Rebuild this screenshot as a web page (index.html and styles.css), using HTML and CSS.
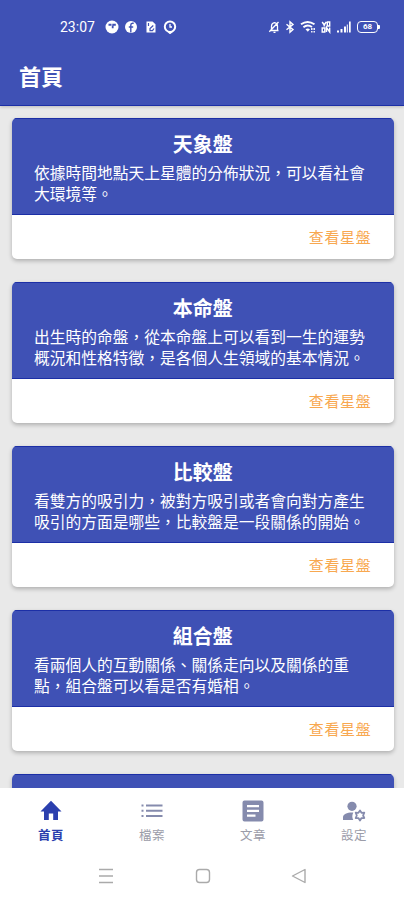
FILE: index.html
```html
<!DOCTYPE html>
<html lang="zh-TW">
<head>
    <meta charset="UTF-8">
    <meta name="viewport" content="width=device-width, initial-scale=1.0">
    <title>首頁</title>
    <link rel="stylesheet" href="styles.css">
</head>
<body>
    <div class="app">
        <header class="header">
            <div class="status-bar">
                <div class="status-left">
                    <span class="clock">23:07</span>
                    <svg width="14" height="14" viewBox="0 0 14 14"><circle cx="7" cy="7" r="6.5" fill="#fff"/><path d="M3.500 3.800h3v2h-3zM7.300 3.800h3.500v2H8.600v2.400H6.800V5.800h.5z" fill="#3f51b5"/></svg>
                    <svg width="14" height="14" viewBox="0 0 14 14"><circle cx="7" cy="7" r="6" fill="#fff"/><path d="M9.7 3.2H8.5Q6.8 3.2 6.8 5v1.2M4.8 7h4.4M6.8 7v5.5" stroke="#3f51b5" stroke-width="1.4" fill="none"/></svg>
                    <svg width="14" height="14" viewBox="0 0 14 14"><path d="M2.500 1.500h6l3 2.800v8.200h-9z" fill="#fff"/><path d="M4.500 3v3M9.300 5.500L6 8.500v2.200h2.500L10 8.500" stroke="#3f51b5" stroke-width="1.2" fill="none"/></svg>
                    <svg width="14" height="14" viewBox="0 0 14 14"><circle cx="7" cy="6.7" r="5.2" fill="none" stroke="#fff" stroke-width="2"/><path d="M7 4v3h2M5.5 12l1.500 1.500 2-1.500z" stroke="#fff" stroke-width="1.3" fill="none"/></svg>
                </div>
                <div class="status-right">
                    <svg width="12" height="14" viewBox="0 0 12 14" fill="none" stroke="#fff" stroke-width="1.3"><path d="M2.5 10.5h8M3.5 10V6Q3.8 3 6.5 2.7 9.3 3 9.5 6v4M5.5 12.3h2M1.3 11.8L10.5 2"/></svg>
                    <svg width="10" height="14" viewBox="0 0 10 14" fill="none" stroke="#fff" stroke-width="1.4"><path d="M1.5 4.2L8 9.6 5 12.2V1.8L8 4.4 1.5 9.8"/></svg>
                    <svg width="16" height="14" viewBox="0 0 16 14" fill="none" stroke="#fff" stroke-width="1.9"><path d="M1 4.300Q7.500-.4 14.500 4.300M3.400 7.200Q7.500 3.800 12 7"/><path d="M5.500 9.200Q7.700 7.600 10 9.200L7.800 11.800z" fill="#fff" stroke="none"/><path d="M11.800 8v4.500M14.2 8v4.500" stroke-dasharray="2 1" stroke-width="1.4"/></svg>
                    <svg width="10" height="14" viewBox="0 0 10 14" fill="none" stroke="#fff" stroke-width="1.4"><path d="M1.2 2l2 3 2-3M3.2 5v1.5M6.3 2h2.4v4H6.3zM1.2 12V8h2.6v4zM5.5 12V7.5l3.2 4.5V7.5"/></svg>
                    <svg width="16" height="14" viewBox="0 0 16 14" fill="#fff"><path d="M1 10.500h2v2H1zM4.500 9h2v3.500h-2zM8 6.500h2v6H8zM13 1.500h1.700v11H13zM10.800 4.500h1v8h-1z"/></svg>
                    <div class="battery"><span>68</span></div>
                </div>
            </div>
            <h1 class="page-title">首頁</h1>
        </header>

        <main class="card-list">
            <section class="card">
                <div class="card-body">
                    <h2 class="card-title">天象盤</h2>
                    <p class="card-text">依據時間地點天上星體的分佈狀況，可以看社會大環境等。</p>
                </div>
                <div class="card-footer"><a class="card-link">查看星盤</a></div>
            </section>
            <section class="card">
                <div class="card-body">
                    <h2 class="card-title">本命盤</h2>
                    <p class="card-text">出生時的命盤，從本命盤上可以看到一生的運勢概況和性格特徵，是各個人生領域的基本情況。</p>
                </div>
                <div class="card-footer"><a class="card-link">查看星盤</a></div>
            </section>
            <section class="card">
                <div class="card-body">
                    <h2 class="card-title">比較盤</h2>
                    <p class="card-text">看雙方的吸引力，被對方吸引或者會向對方產生吸引的方面是哪些，比較盤是一段關係的開始。</p>
                </div>
                <div class="card-footer"><a class="card-link">查看星盤</a></div>
            </section>
            <section class="card">
                <div class="card-body">
                    <h2 class="card-title">組合盤</h2>
                    <p class="card-text">看兩個人的互動關係、關係走向以及關係的重點，組合盤可以看是否有婚相。</p>
                </div>
                <div class="card-footer"><a class="card-link">查看星盤</a></div>
            </section>
            <section class="card">
                <div class="card-body"></div>
            </section>
        </main>

        <nav class="tab-bar">
            <a class="tab active">
                <svg width="24" height="24" viewBox="0 0 24 24" fill="currentColor"><path d="M9.800 21v-6.500h4.400V21H19v-8.500h3.500L12 1.800 1.500 12.500H5V21z"/></svg>
                <span>首頁</span>
            </a>
            <a class="tab">
                <svg width="24" height="24" viewBox="0 0 24 24" fill="currentColor"><path d="M1.500 5.500h2v2h-2zM6 5.500h16.500v2H6zM1.500 10.800h2v2h-2zM6 10.800h16.500v2H6zM1.500 16h2v2h-2zM6 16h16.500v2H6z"/></svg>
                <span>檔案</span>
            </a>
            <a class="tab">
                <svg width="24" height="24" viewBox="0 0 24 24" fill="currentColor"><path fill-rule="evenodd" d="M3.500 1.500h17a2 2 0 0 1 2 2v17a2 2 0 0 1-2 2h-17a2 2 0 0 1-2-2v-17a2 2 0 0 1 2-2zM6 6v2.200h12V6zM6 10.800V13h12v-2.200zM6 15.600v2.200h8.500v-2.200z"/></svg>
                <span>文章</span>
            </a>
            <a class="tab">
                <svg width="24" height="24" viewBox="0 0 24 24" fill="currentColor"><circle cx="10" cy="7.300" r="4.600"/><path d="M1 21v-2.800c0-3 4-4.700 9-4.700h1.300a8 8 0 0 0 0 7.500z"/><path d="M18 11.500l1.500 2.300 2.800-.1-1.200 2.800 1.200 2.500-2.800.1L18 21.500l-1.600-2.400-2.700-.1 1.100-2.500-1.100-2.800 2.700.1z" fill="none" stroke="currentColor" stroke-width="1.800" stroke-linejoin="round"/></svg>
                <span>設定</span>
            </a>
        </nav>

        <div class="system-nav">
            <svg width="16" height="16" viewBox="0 0 16 16"><path d="M1 1.500h14M1 8h14M1 14.500h14"/></svg>
            <svg width="16" height="16" viewBox="0 0 16 16"><rect x="1.500" y="1.500" width="13" height="13" rx="3"/></svg>
            <svg width="16" height="16" viewBox="0 0 16 16"><path d="M14 1.500v13L1.500 8z"/></svg>
        </div>
    </div>
</body>
</html>
```
FILE: styles.css
```css
:root {
    --primary: #3f51b5;
    --primary-dark: #1c2fa6;
    --bg: #e9e9e9;
    --accent: #f8a850;
    --muted: #858bad;
}

* {
    box-sizing: border-box;
}

body {
    margin: 0;
    font-family: 'Noto Sans CJK TC', sans-serif;
    background: var(--bg);
}

.app {
    display: flex;
    flex-direction: column;
    height: 900px;
    overflow: hidden;
}

.header {
    flex: none;
    height: 106px;
    background: var(--primary);
    color: #fff;
    border-bottom: 1px solid var(--primary-dark);
    box-shadow: 0 1px 3px rgba(0, 0, 0, 0.2);
}

.status-bar {
    display: flex;
    justify-content: space-between;
    align-items: center;
    height: 53px;
    padding: 0 24px 0 60px;
}

.status-left,
.status-right {
    display: flex;
    align-items: center;
}

.status-left {
    gap: 5.5px;
}

.status-right {
    gap: 5px;
}

.clock {
    width: 39px;
    font-family: Roboto, sans-serif;
    font-size: 14px;
}

.battery {
    position: relative;
    display: flex;
    align-items: center;
    justify-content: center;
    width: 21px;
    height: 12px;
    margin-right: 2px;
    border: 1.5px solid #fff;
    border-radius: 4px;
    font: 700 8px/1 Roboto, sans-serif;
}

.battery::after {
    content: '';
    position: absolute;
    right: -3px;
    width: 2px;
    height: 4px;
    background: #fff;
    border-radius: 0 1px 1px 0;
}

.page-title {
    margin: 6px 0 0 19px;
    font-size: 22px;
    line-height: 32px;
    font-weight: 700;
}

.card-list {
    flex: 1;
    min-height: 0;
    overflow: hidden;
    display: flex;
    flex-direction: column;
    gap: 23px;
    padding: 12px 10.5px 0 12px;
}

.card {
    flex: none;
    height: 141px;
    overflow: hidden;
    background: #fff;
    border-radius: 5px;
    box-shadow: 0 2px 4px rgba(0, 0, 0, 0.25);
}

.card-body {
    height: 97px;
    padding: 12px 22px 0;
    background: var(--primary);
    border-top: 1px solid var(--primary-dark);
    border-bottom: 1px solid var(--primary-dark);
    color: #fff;
}

.card-title {
    margin: 0;
    font-size: 20px;
    line-height: 26px;
    font-weight: 700;
    text-align: center;
}

.card-text {
    margin: 6px 0 0;
    font-size: 15.75px;
    line-height: 20.5px;
}

.card-footer {
    display: flex;
    align-items: center;
    justify-content: flex-end;
    height: 44px;
    padding: 0 22px 1px;
}

.card-link {
    color: var(--accent);
    font-size: 15px;
    letter-spacing: 0.7px;
}

.tab-bar {
    flex: none;
    display: grid;
    grid-template-columns: repeat(4, 1fr);
    height: 64px;
    background: #fff;
}

.tab {
    display: flex;
    flex-direction: column;
    align-items: center;
    padding: 11px 0 0 1px;
    color: var(--muted);
    font-size: 12.5px;
    line-height: 18px;
    letter-spacing: 0.5px;
}

.tab span {
    margin-top: 3px;
    color: #9b9ca8;
}

.tab.active,
.tab.active span {
    color: #2b3fae;
}

.tab.active span {
    font-weight: 700;
}

.system-nav {
    flex: none;
    display: grid;
    grid-template-columns: repeat(3, 96.5px);
    justify-content: center;
    justify-items: center;
    align-items: center;
    height: 48px;
    padding-left: 1px;
    background: #fff;
}

.system-nav svg {
    fill: none;
    stroke: #aaa;
    stroke-width: 1.4;
    stroke-linejoin: round;
}
```
